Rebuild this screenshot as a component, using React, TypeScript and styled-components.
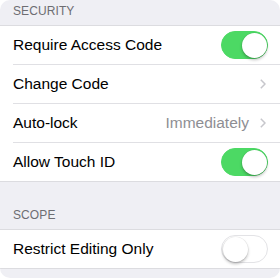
import React from "react";
import styled, { createGlobalStyle } from "styled-components";

const GlobalStyle = createGlobalStyle`
  html, body {
    margin: 0;
    padding: 0;
    background: #ffffff;
  }
  body {
    font-family: "Liberation Sans", Arial, sans-serif;
    -webkit-font-smoothing: antialiased;
  }
`;

const Panel = styled.div`
  width: 280px;
  height: 278px;
  background: #efeff4;
  border-radius: 10px;
  overflow: hidden;
  display: flex;
  flex-direction: column;
`;

const SectionHeader = styled.div<{ $height: number }>`
  height: ${(p) => p.$height}px;
  display: flex;
  align-items: flex-end;
  padding: 0 13px 7px;
  box-sizing: border-box;
  font-size: 12px;
  color: #6d6d72;
  letter-spacing: 0.1px;
`;

const Group = styled.div`
  background: #ffffff;
  border-top: 1px solid #dcdce0;
  border-bottom: 1px solid #dcdce0;
`;

const Row = styled.div<{ $last?: boolean }>`
  height: 38px;
  margin-left: 13px;
  padding-right: 12px;
  display: flex;
  align-items: center;
  border-bottom: ${(p) => (p.$last ? "none" : "1px solid #e0e0e4")};
`;

const Label = styled.div`
  flex: 1;
  font-size: 15.5px;
  color: #000000;
`;

const Detail = styled.div`
  font-size: 15.5px;
  color: #8e8e93;
  margin-right: 11px;
`;

const Track = styled.div<{ $on: boolean }>`
  width: 47px;
  height: 28px;
  border-radius: 14px;
  box-sizing: border-box;
  background: ${(p) => (p.$on ? "#4cd964" : "#ffffff")};
  border: 1px solid ${(p) => (p.$on ? "#4cd964" : "#e3e3e6")};
  display: flex;
  align-items: center;
  justify-content: ${(p) => (p.$on ? "flex-end" : "flex-start")};
  padding: 0 0.5px;
`;

const Knob = styled.div`
  width: 25px;
  height: 25px;
  border-radius: 50%;
  background: #ffffff;
  box-shadow: 0 2px 3px rgba(0, 0, 0, 0.25), 0 0 0 0.5px rgba(0, 0, 0, 0.08);
`;

const Toggle: React.FC<{ on: boolean }> = ({ on }) => (
  <Track $on={on}>
    <Knob />
  </Track>
);

const Chevron = () => (
  <svg width="6" height="10" viewBox="0 0 6 10" style={{ marginRight: 2 }}>
    <polyline points="0.8,0.8 5,5 0.8,9.2" fill="none" stroke="#c7c7cc" strokeWidth="1.5" />
  </svg>
);

export default function App() {
  return (
    <>
      <GlobalStyle />
      <Panel>
        <SectionHeader $height={25}>SECURITY</SectionHeader>
        <Group>
          <Row>
            <Label>Require Access Code</Label>
            <Toggle on />
          </Row>
          <Row>
            <Label>Change Code</Label>
            <Chevron />
          </Row>
          <Row>
            <Label>Auto-lock</Label>
            <Detail>Immediately</Detail>
            <Chevron />
          </Row>
          <Row $last>
            <Label>Allow Touch ID</Label>
            <Toggle on />
          </Row>
        </Group>
        <SectionHeader $height={47}>SCOPE</SectionHeader>
        <Group>
          <Row $last>
            <Label>Restrict Editing Only</Label>
            <Toggle on={false} />
          </Row>
        </Group>
      </Panel>
    </>
  );
}
